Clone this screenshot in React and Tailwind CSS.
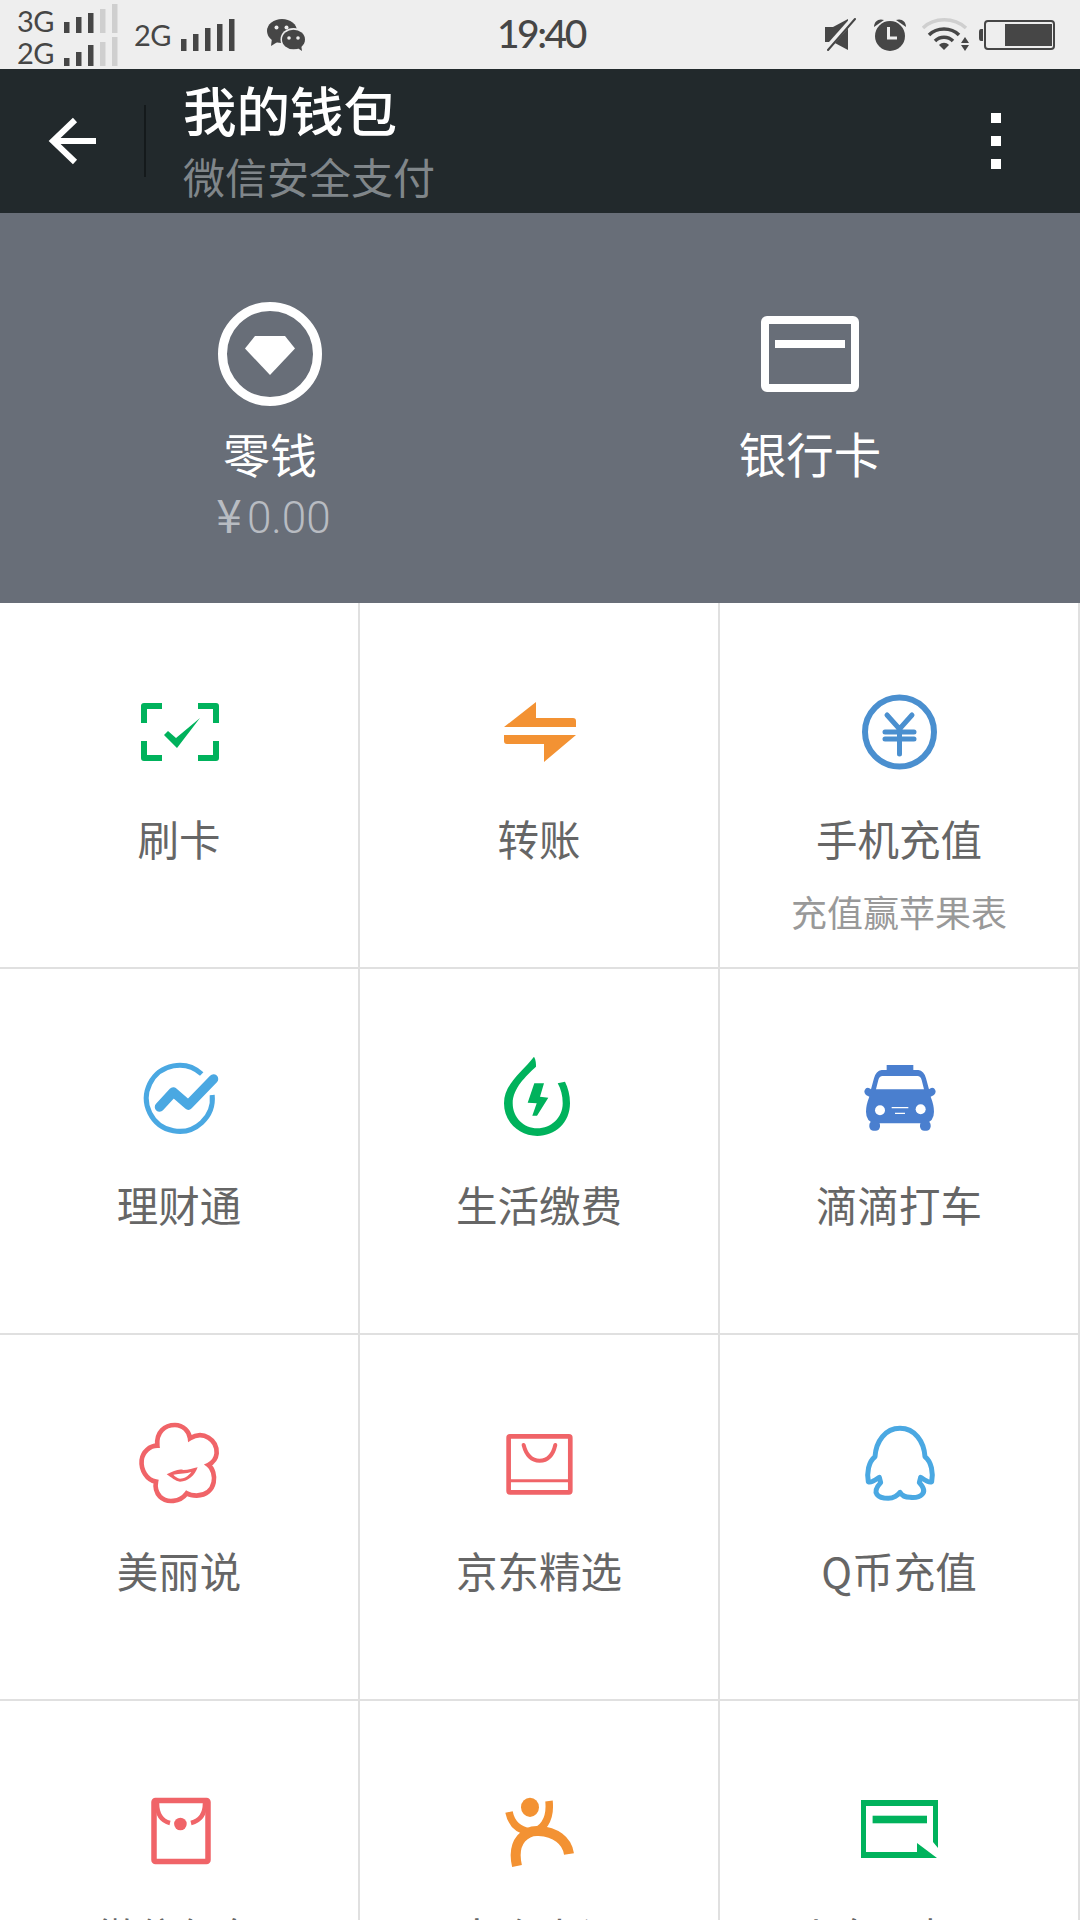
import React from "react";

const GREEN = "#00b25c";
const ORANGE = "#f39233";
const RED = "#f06468";
const SKY = "#4aa8e2";
const DARK = "#464646";

function SignalBars({ x, tops, bottom, w, h, lightFrom = 9 }) {
  return (
    <svg width={w} height={h} className="shrink-0 block">
      {tops.map((top, i) => (
        <rect key={i} x={x[i]} y={top} width="5.5" height={bottom - top} fill={i >= lightFrom ? "#cfcfcf" : DARK} />
      ))}
    </svg>
  );
}

function WechatIcon() {
  return (
    <svg width="38" height="32" viewBox="0 0 38 32" className="shrink-0">
      <ellipse cx="15" cy="12" rx="15" ry="12" fill={DARK} />
      <path d="M5 19 L4 27 L12 22 Z" fill={DARK} />
      <circle cx="9.5" cy="8.5" r="2" fill="#eeeeee" />
      <circle cx="19.5" cy="8.5" r="2" fill="#eeeeee" />
      <ellipse cx="26.5" cy="20.5" rx="13" ry="11.5" fill="#eeeeee" />
      <ellipse cx="26.5" cy="20.5" rx="11.5" ry="9.8" fill={DARK} />
      <path d="M29 28 L35 32 L34 25 Z" fill={DARK} />
      <circle cx="22" cy="19" r="1.8" fill="#eeeeee" />
      <circle cx="31" cy="19" r="1.8" fill="#eeeeee" />
    </svg>
  );
}

function MuteIcon() {
  return (
    <svg width="31" height="33" viewBox="0 0 31 33" className="shrink-0">
      <path d="M0 9 H8 L23 1 V32 L8 24 H0 Z" fill={DARK} />
      <path d="M27 2 L3 29" stroke="#eeeeee" strokeWidth="5" />
      <path d="M30 1 L3 32" stroke={DARK} strokeWidth="2" strokeLinecap="round" />
    </svg>
  );
}

function AlarmIcon() {
  return (
    <svg width="34" height="32" viewBox="0 0 34 32" className="shrink-0">
      <circle cx="17" cy="17" r="15" fill={DARK} />
      <path d="M1 8 C1 2 6 -1 11 1 Z" fill={DARK} />
      <path d="M33 8 C33 2 28 -1 23 1 Z" fill={DARK} />
      <path d="M15.5 8 V19 H24" fill="none" stroke="#eeeeee" strokeWidth="3" />
    </svg>
  );
}

function WifiIcon() {
  return (
    <svg width="47" height="33" viewBox="0 0 47 33" className="shrink-0">
      <path d="M1 10 C12 -1 32 -1 44 10" fill="none" stroke="#cfcfcf" strokeWidth="3.5" />
      <path d="M7 17 C15 9 29 9 37 17" fill="none" stroke={DARK} strokeWidth="3.5" />
      <path d="M13 23 C18 18 26 18 31 23" fill="none" stroke={DARK} strokeWidth="3.5" />
      <path d="M17 27 C20 24 24 24 27 27 L22 32 Z" fill={DARK} />
      <path d="M43 19 L47 25 H39 Z" fill={DARK} />
      <path d="M39 27 H47 L43 33 Z" fill={DARK} />
    </svg>
  );
}

function BatteryIcon() {
  return (
    <svg width="76" height="30" viewBox="0 0 76 30" className="shrink-0">
      <path d="M4 9 H2 Q0 9 0 12 V18 Q0 21 2 21 H4 Z" fill={DARK} />
      <rect x="6" y="1" width="69" height="28" rx="3" fill="none" stroke={DARK} strokeWidth="2" />
      <rect x="26" y="4" width="47" height="22" fill={DARK} />
    </svg>
  );
}

function StatusBar() {
  return (
    <div className="h-[69px] bg-[#eeeeee] flex items-center pl-[17px] pr-[25px] overflow-hidden text-[#464646] font-['Lato',sans-serif] shrink-0">
      <div className="self-start pt-[4px] w-[101px] shrink-0">
        <div className="flex h-[33px] items-start">
          <span className="w-[47px] text-[29px] leading-[33px] tracking-[-0.5px]">3G</span>
          <SignalBars w={54} h={29} bottom={29} x={[0, 12, 24, 36, 48]} tops={[18, 13, 9, 5, 0]} lightFrom={3} />
        </div>
        <div className="flex h-[32px] items-start">
          <span className="w-[47px] text-[29px] leading-[32px] tracking-[-0.5px]">2G</span>
          <SignalBars w={54} h={29} bottom={29} x={[0, 12, 24, 36, 48]} tops={[21, 15, 8, 5, 0]} lightFrom={3} />
        </div>
      </div>
      <div className="ml-[16px] flex items-center">
        <span className="w-[47px] text-[29px] leading-[33px] tracking-[-0.5px]">2G</span>
        <SignalBars w={54} h={32} bottom={32} x={[0, 12, 24, 36, 48]} tops={[20, 15, 9, 5, 0]} />
      </div>
      <div className="ml-[32px]">
        <WechatIcon />
      </div>
      <span className="ml-[192px] mb-[3px] text-[39px] leading-[48px] font-medium tracking-[-2.5px]">19:40</span>
      <div className="ml-auto flex items-center">
        <MuteIcon />
        <div className="ml-[17px]">
          <AlarmIcon />
        </div>
        <div className="ml-[15px]">
          <WifiIcon />
        </div>
        <div className="ml-[10px]">
          <BatteryIcon />
        </div>
      </div>
    </div>
  );
}

function Header() {
  return (
    <div className="h-[144px] bg-[#22292c] flex items-center shrink-0">
      <div className="w-[144px] flex justify-center shrink-0">
        <svg width="48" height="48" viewBox="0 0 48 48">
          <path d="M48 24 H6" stroke="#ffffff" strokeWidth="6" />
          <path d="M27 3 L5 24 L27 45" fill="none" stroke="#ffffff" strokeWidth="6" />
        </svg>
      </div>
      <div className="w-[2px] h-[72px] bg-[#14191b] shrink-0" />
      <div className="ml-[37px] flex flex-col">
        <span className="text-[53.5px] leading-[64px] text-white font-medium mt-[-5px]">我的钱包</span>
        <span className="text-[42px] leading-[50px] text-[#80868a] mt-[10px]">微信安全支付</span>
      </div>
      <div className="ml-auto mr-[79px] flex flex-col gap-[13px]">
        <div className="w-[10px] h-[10px] bg-white" />
        <div className="w-[10px] h-[10px] bg-white" />
        <div className="w-[10px] h-[10px] bg-white" />
      </div>
    </div>
  );
}

function WalletPanel() {
  return (
    <div className="h-[390px] bg-[#686e78] grid grid-cols-2 shrink-0 pt-[89px]">
      <div className="flex flex-col items-center">
        <svg width="104" height="104" viewBox="0 0 104 104">
          <circle cx="52" cy="52" r="47.5" fill="none" stroke="#ffffff" strokeWidth="9" />
          <path d="M37 34 H67 L77 46.5 L52 73 L27 46.5 Z" fill="#ffffff" />
        </svg>
        <span className="mt-[17px] text-[47px] leading-[60px] text-white">零钱</span>
        <span className="mt-[-1px] ml-[7px] text-[#b8bcc2] leading-[62px] flex items-baseline">
          <span className="text-[46px] mr-[5px]">¥</span>
          <span className="text-[44px] font-['Roboto',sans-serif] font-light">0.00</span>
        </span>
      </div>
      <div className="flex flex-col items-center">
        <div className="h-[104px] flex items-center">
          <div className="w-[98px] h-[76px] border-[8px] border-white rounded-[6px] pt-[16px] px-[6px]">
            <div className="h-[8px] bg-white" />
          </div>
        </div>
        <span className="mt-[17px] text-[47.5px] leading-[60px] text-white">银行卡</span>
      </div>
    </div>
  );
}

const icons = {
  swipe: (
    <>
      <path
        d="M33 24 H15 V41 M69 24 H87 V41 M33 76 H15 V59 M69 76 H87 V59"
        fill="none"
        stroke={GREEN}
        strokeWidth="6"
        strokeLinejoin="round"
      />
      <path d="M35 53 L39 49 L47 56 L71 36 L48 66 Z" fill={GREEN} />
    </>
  ),
  transfer: (
    <>
      <path d="M47 20 V36 H84 Q87 36 87 39 V45 H15 Z" fill={ORANGE} />
      <path d="M15 53 H87 L55 80 V62 H18 Q15 62 15 59 Z" fill={ORANGE} />
    </>
  ),
  topup: (
    <>
      <circle cx="50.5" cy="50" r="34.5" fill="none" stroke="#4a8fcf" strokeWidth="6" />
      <path d="M38 33 L50.5 47 L63 33 M50.5 47 V72 M36 50 H65 M36 57 H65" fill="none" stroke="#4a8fcf" strokeWidth="5" strokeLinecap="round" />
    </>
  ),
  licai: (
    <>
      <path d="M72.7 26 A33 33 0 1 0 83.2 47" fill="none" stroke={SKY} strokeWidth="5" />
      <path d="M30.5 59 L44.3 44 L59.3 57 L84.5 31" fill="none" stroke={SKY} strokeWidth="9.5" strokeLinejoin="round" strokeLinecap="round" />
    </>
  ),
  bills: (
    <>
      <path
        d="M45 8.7 C47 12 47 16 47 18.7 C37 28 24 40 23.7 55.3 C23.7 70 35 80.3 48.3 80.3 C62 80.3 73.7 70 73.7 55.3 C73.7 48 72 41 68.7 35.3 L76 33.7 C79 40 81 47 81 55.3 C81 75 66 88 48.3 88 C30 88 15 74 15 55.3 C15 36 33 24 45 8.7 Z"
        fill={GREEN}
      />
      <path d="M45.3 35.3 H55 L51 48.7 L59.3 49.7 L48 67.7 H43.3 L47.7 55.3 L38.7 54.7 Z" fill={GREEN} />
    </>
  ),
  taxi: (
    <g transform="translate(1 2) scale(0.3333)" fill="#4a7fcf">
      <path d="M110 45 H190 V60 H205 Q222 62 228 85 L237 118 Q245 110 252 115 Q262 125 252 135 L242 140 Q252 165 252 185 Q252 215 225 220 H75 Q48 215 48 185 Q48 165 58 140 L48 135 Q38 125 48 115 Q55 110 63 118 L72 85 Q78 62 95 60 H110 Z" />
      <rect x="58" y="212" width="32" height="30" rx="13" />
      <rect x="210" y="212" width="32" height="30" rx="13" />
      <path d="M98 78 H202 Q212 78 215 90 L222 118 H78 L85 90 Q88 78 98 78 Z" fill="#ffffff" />
      <circle cx="90" cy="181" r="15" fill="#ffffff" />
      <circle cx="212" cy="178" r="15" fill="#ffffff" />
      <path d="M125 173 H175 M135 190 H165" stroke="#ffffff" strokeWidth="4" />
    </g>
  ),
  meili: (
    <g transform="translate(1 1) scale(0.3333)">
      <path
        d="M82 92 C78 50 105 30 135 30 C160 30 178 50 180 70 C220 45 262 75 260 115 C258 135 245 145 235 150 C262 170 262 240 200 242 C185 242 175 238 170 235 C150 262 110 265 90 245 C78 232 75 215 78 200 C50 195 32 165 35 135 C38 110 60 92 82 92 Z"
        fill="none"
        stroke={RED}
        strokeWidth="14"
      />
      <path d="M110 178 C130 170 145 160 160 165 C175 165 190 160 203 157 C195 180 175 200 150 200 C135 198 125 188 110 178 Z" fill={RED} />
      <path d="M130 179 C150 176 170 176 184 171 C175 184 162 191 150 191 C142 190 136 185 130 179 Z" fill="#ffffff" />
    </g>
  ),
  jd: (
    <g transform="translate(-359 1) scale(0.3333)" fill="none" stroke={RED}>
      <rect x="1136" y="64" width="185" height="168" rx="4" strokeWidth="14" />
      <path d="M1136 197 H1321" strokeWidth="9" />
      <path d="M1181 90 C1190 125 1210 137 1229 137 C1250 137 1268 125 1276 90" strokeWidth="12" strokeLinecap="round" />
    </g>
  ),
  qq: (
    <g transform="translate(1 6) scale(0.3333)">
      <path
        d="M150 25 C195 25 222 65 225 110 C245 125 250 160 245 185 C235 190 222 178 212 172 L208 188 C238 220 210 235 180 232 C165 232 155 225 150 217 C145 225 130 235 115 235 C85 235 62 220 92 188 L88 172 C78 178 65 190 55 185 C50 160 55 125 75 110 C78 65 105 25 150 25 Z"
        fill="none"
        stroke={SKY}
        strokeWidth="15"
        strokeLinejoin="round"
      />
    </g>
  ),
  redpacket: (
    <>
      <rect x="25" y="20.5" width="54" height="61" rx="1.5" fill="none" stroke={RED} strokeWidth="5.5" />
      <path d="M28 23 C28 35 33 41 41 43 M76 23 C76 35 70 41 62 43" fill="none" stroke={RED} strokeWidth="4.5" />
      <circle cx="51.4" cy="44" r="6.3" fill={RED} />
    </>
  ),
  dianping: (
    <>
      <ellipse cx="41" cy="27.3" rx="9" ry="9.6" fill={ORANGE} />
      <path d="M20 32 C22 42 28 50 41 52 C53 52 62 40 60 21" fill="none" stroke={ORANGE} strokeWidth="7.5" />
      <path d="M28 86 C22 60 38 50 50 51 C66 52 78 60 80 74" fill="none" stroke={ORANGE} strokeWidth="10" />
    </>
  ),
  train: (
    <>
      <path d="M12 20 H89 V68 L84 62 V26 H17 V72 H68 V63 L88 78 H12 Z" fill={GREEN} />
      <rect x="23.6" y="35.7" width="54.4" height="7.6" fill={GREEN} />
    </>
  ),
};

const items = [
  { icon: "swipe", label: "刷卡" },
  { icon: "transfer", label: "转账" },
  { icon: "topup", label: "手机充值", sub: "充值赢苹果表" },
  { icon: "licai", label: "理财通" },
  { icon: "bills", label: "生活缴费" },
  { icon: "taxi", label: "滴滴打车" },
  { icon: "meili", label: "美丽说" },
  { icon: "jd", label: "京东精选" },
  { icon: "qq", label: "Q币充值" },
  { icon: "redpacket", label: "微信红包" },
  { icon: "dianping", label: "大众点评" },
  { icon: "train", label: "火车票机票" },
];

function Cell({ item }) {
  return (
    <div className="h-[366px] border-r-2 border-b-2 border-[#e0e0e0] flex flex-col items-center">
      <svg width="100" height="100" viewBox="0 0 100 100" className="mt-[79px] shrink-0">
        {icons[item.icon]}
      </svg>
      <span className="mt-[28px] text-[41.5px] leading-[56px] text-[#666666]">{item.label}</span>
      {item.sub && <span className="mt-[20px] text-[36px] leading-[50px] text-[#999999]">{item.sub}</span>}
    </div>
  );
}

export default function App() {
  return (
    <div className="w-[1080px] h-[1920px] overflow-hidden bg-white flex flex-col font-['Noto_Sans_CJK_SC','Noto_Sans',sans-serif]">
      <StatusBar />
      <Header />
      <WalletPanel />
      <div className="grid grid-cols-3">
        {items.map((item) => (
          <Cell key={item.icon} item={item} />
        ))}
      </div>
    </div>
  );
}
